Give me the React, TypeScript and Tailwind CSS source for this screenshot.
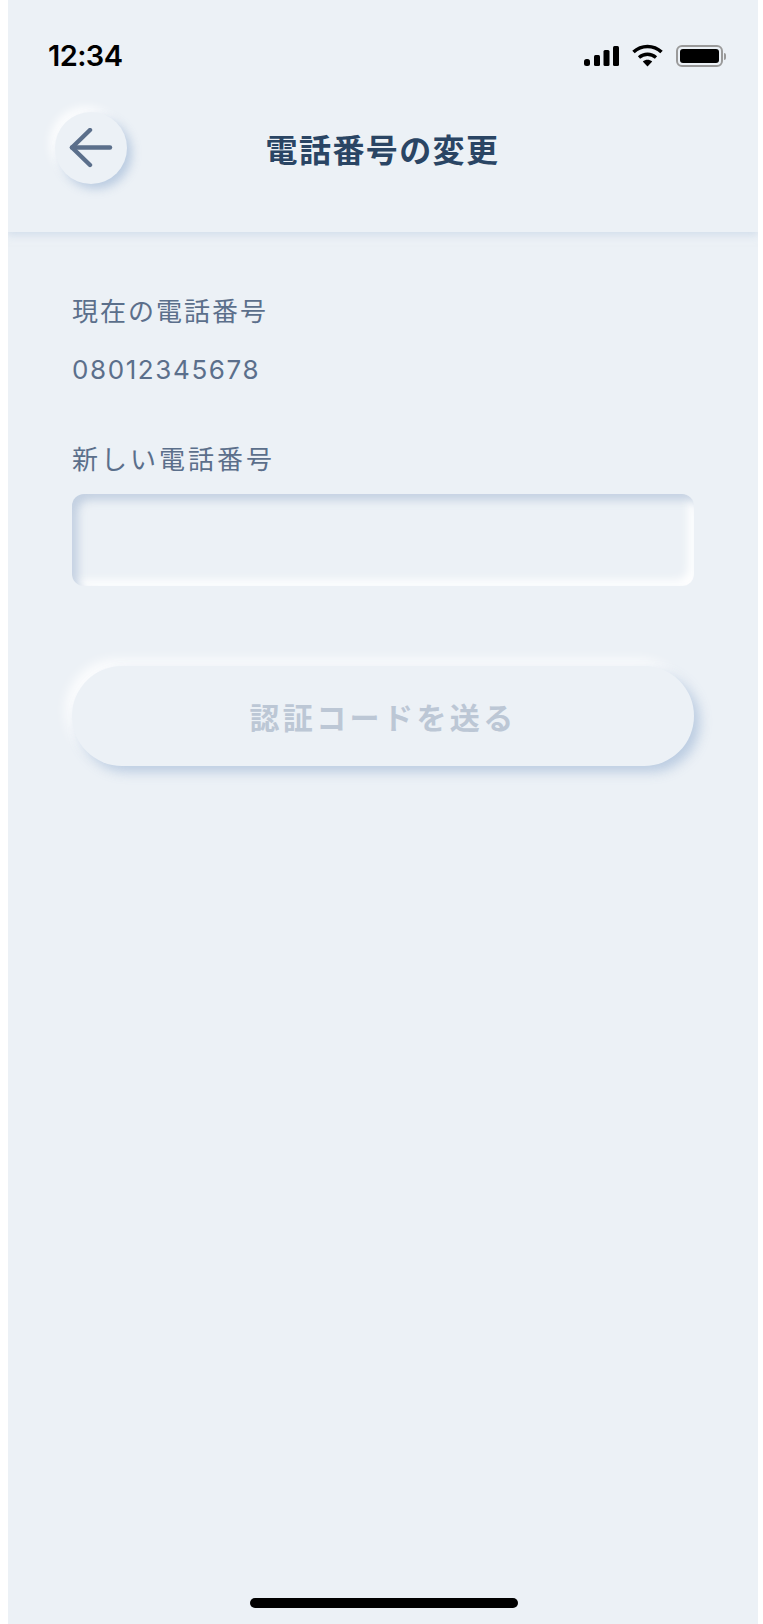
import React from 'react';

const cjk = "font-['Noto_Sans_CJK_JP','Noto_Sans',sans-serif]";

function StatusIcons() {
  return (
    <div className="flex items-center gap-[13px]">
      {/* signal */}
      <svg width="35" height="22" viewBox="0 0 35 22" fill="#000">
        <rect x="0" y="14" width="6" height="7" rx="2.5" />
        <rect x="10" y="10" width="6" height="11" rx="1.5" />
        <rect x="19.5" y="5" width="6" height="16" rx="1.5" />
        <rect x="29" y="1" width="6" height="20" rx="1.5" />
      </svg>
      {/* wifi */}
      <svg width="31" height="23" viewBox="0 0 31 23" fill="none" className="-mt-[2px]">
        <path d="M1.5 8 C9.5 0.6 21.5 0.6 29.5 8" stroke="#000" strokeWidth="3.6" />
        <path d="M7 13.5 C12 9.2 19 9.2 24 13.5" stroke="#000" strokeWidth="3.4" />
        <path d="M10.8 17.6 C13.6 15.2 17.4 15.2 20.2 17.6 L15.5 22.4 Z" fill="#000" />
      </svg>
      {/* battery */}
      <div className="flex items-center gap-[1px]">
        <div className="w-[47px] h-[22px] rounded-[6px] border-2 border-[#9a9a9a] p-[2px]">
          <div className="w-full h-full rounded-[3px] bg-black" />
        </div>
        <div className="w-[2px] h-[7px] rounded-r-sm bg-[#9a9a9a]" />
      </div>
    </div>
  );
}

export default function App() {
  return (
    <div className="min-h-screen bg-white pl-2 pr-[5px]">
      <div className="relative h-[1624px] bg-[#ecf1f6] overflow-hidden">
        {/* Header with status bar */}
        <header className="-ml-px bg-[#ecf1f6] h-[232px] shadow-[0_3px_8px_rgba(190,205,225,0.55)]">
          <div className="flex items-center justify-between pl-[41px] pr-[32px] pt-[28px] h-[84px]">
            <span className="font-['Inter',sans-serif] text-[29px] font-semibold leading-[40px] tracking-[-0.6px] text-black">
              12:34
            </span>
            <StatusIcons />
          </div>
          <div className="relative flex items-center justify-center h-[72px] mt-[28px]">
            <button className="absolute left-[48px] top-0 w-[72px] h-[72px] rounded-full bg-[#ecf1f6] flex items-center justify-center shadow-[5px_5px_10px_rgba(175,195,220,0.8),-5px_-5px_10px_rgba(255,255,255,0.9)]">
              <svg width="44" height="40" viewBox="0 0 44 40" fill="none" stroke="#5b6f8b" strokeWidth="4.4" strokeLinecap="round" strokeLinejoin="round">
                <path d="M41 19.5H3" />
                <path d="M21 2 3 19.5 21 37" />
              </svg>
            </button>
            <h1 className={`${cjk} text-[32px] font-bold leading-[44px] tracking-[1.4px] text-[#2a4564]`}>
              電話番号の変更
            </h1>
          </div>
        </header>

        {/* Form */}
        <main className="px-[64px] pt-[64px]">
          <p className={`${cjk} text-[26px] leading-[28px] tracking-[2px] text-[#5b6f8b]`}>現在の電話番号</p>
          <p className="mt-[32px] font-['Inter',sans-serif] text-[26px] leading-[28px] tracking-[1.6px] text-[#5b6f8b]">
            08012345678
          </p>
          <p className={`${cjk} mt-[60px] text-[26px] leading-[28px] tracking-[3px] text-[#5b6f8b]`}>新しい電話番号</p>
          <div className="mt-[22px] h-[92px] rounded-[12px] bg-[#ecf1f6] shadow-[inset_6px_6px_8px_rgba(185,200,220,0.8),inset_-6px_-6px_8px_rgba(255,255,255,0.95)]" />
          <button className="mt-[80px] w-full h-[100px] rounded-full bg-[#ecf1f6] flex items-center justify-center shadow-[6px_6px_12px_rgba(175,195,220,0.8),-6px_-6px_12px_rgba(255,255,255,0.9)]">
            <span className={`${cjk} text-[30px] font-bold leading-[40px] tracking-[3.4px] text-[#bcc7d5]`}>認証コードを送る</span>
          </button>
        </main>

        <div className="absolute bottom-[16px] left-[242px] w-[268px] h-[10px] rounded-full bg-black" />
      </div>
    </div>
  );
}
